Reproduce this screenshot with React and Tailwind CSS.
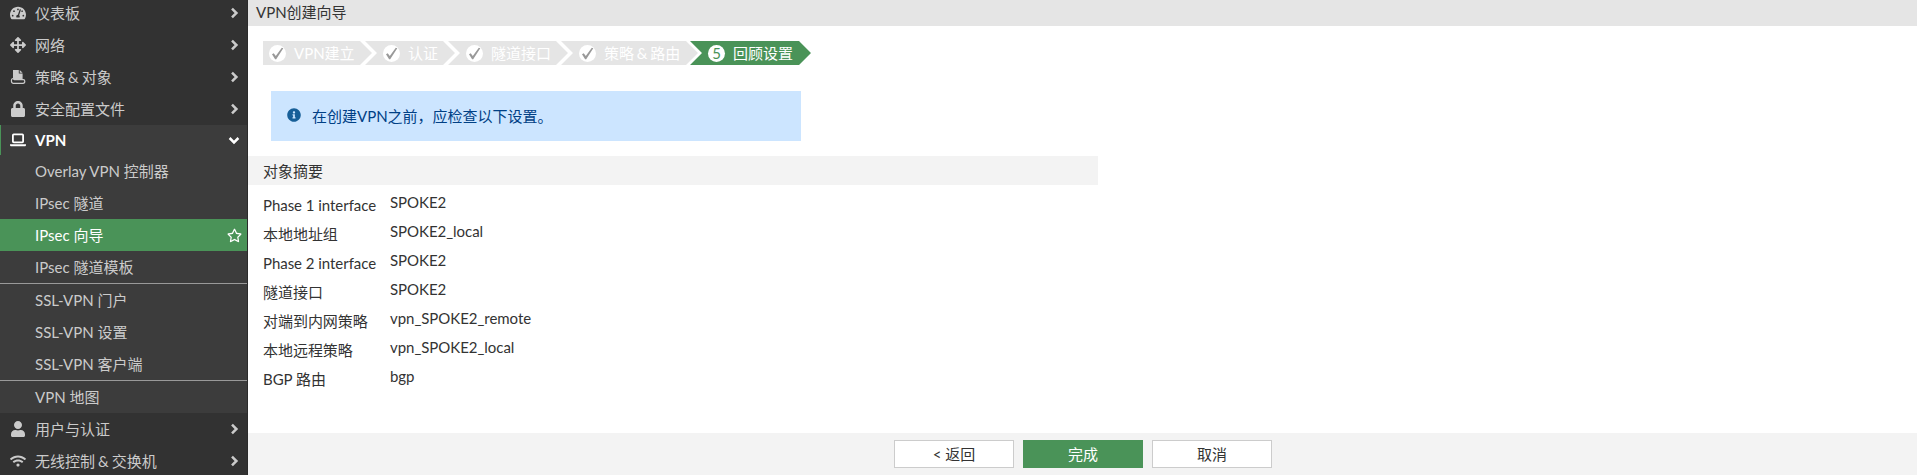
import React from "react";
import { FaTachometerAlt, FaArrowsAlt, FaLock, FaUser, FaWifi, FaInfoCircle, FaRegStar } from "react-icons/fa";

function PolicyIcon() {
  return (
    <svg width="16" height="16" viewBox="0 0 16 16" fill="currentColor">
      <path d="M3 1h5.800v3.400H12.600V10H3z" />
      <path d="M9.700 1l2.900 2.700H9.700z" />
      <path d="M2.800 9.600c-1.200 0-1.400 1-1.400 2s.2 2.700 1.600 2.700h10c1.400 0 1.800-.8 1.800-2 0-1.100-.5-1.700-1.600-1.700H4.400c-.8 0-.8-1-1.600-1z" fill="#323232" stroke="currentColor" strokeWidth="1.200" />
    </svg>
  );
}

function LaptopIcon() {
  return (
    <svg width="16" height="16" viewBox="0 0 16 16" fill="none" stroke="currentColor">
      <rect x="2.900" y="2.400" width="10.200" height="8" rx="0.800" strokeWidth="1.800" />
      <path d="M0 12.200h16v.8c0 .8-.6 1.300-1.300 1.300H1.300C.6 14.300 0 13.800 0 13z" fill="currentColor" stroke="none" />
    </svg>
  );
}

function Chevron({ down }) {
  return (
    <svg width="12" height="12" viewBox="0 0 12 12" fill="none" stroke="currentColor" strokeWidth="2.500" className={down ? "rotate-90" : ""}>
      <path d="M4 1.600L8.400 6L4 10.400" />
    </svg>
  );
}

function MenuRow({ icon, label, open }) {
  if (open) {
    return (
      <div className="flex h-[30px] shrink-0 items-center border-l border-[#4a9358] pr-[7px] pl-[9px] font-bold text-white">
        <span className="flex w-4 justify-center">{icon}</span>
        <span className="ml-[9px] flex-1">{label}</span>
        <Chevron down />
      </div>
    );
  }
  return (
    <div className="flex h-8 shrink-0 items-center pr-[7px] pl-[10px]">
      <span className="flex w-4 justify-center">{icon}</span>
      <span className="ml-[9px] flex-1 [word-spacing:-0.8px]">{label}</span>
      <Chevron />
    </div>
  );
}

function SubRow({ label, active }) {
  return (
    <div className={"flex h-8 shrink-0 items-center pr-[5px] pl-[35px] " + (active ? "bg-[#4a9358] text-white" : "")}>
      <span className="flex-1">{label}</span>
      {active && <FaRegStar size={15} />}
    </div>
  );
}

function Check() {
  return (
    <svg width="17" height="17" viewBox="0 0 17 17">
      <circle cx="8.500" cy="8.500" r="8.500" fill="#fff" />
      <path d="M3 9.300l1.700-1 2.100 2.700 6-8.200 1.500.4-7.100 11h-1.100z" fill="#999" />
    </svg>
  );
}

const shapes = {
  first: "[clip-path:polygon(0_0,calc(100%_-_12px)_0,100%_50%,calc(100%_-_12px)_100%,0_100%)]",
  rest: "[clip-path:polygon(0_0,calc(100%_-_12px)_0,100%_50%,calc(100%_-_12px)_100%,0_100%,12px_50%)]",
};

function Step({ label, width, offset = "pl-[18px]", first, current }) {
  return (
    <div className={`flex h-6 shrink-0 items-center text-white ${width} ${offset} ${first ? shapes.first : shapes.rest} ${current ? "bg-[#4a9358]" : "bg-[#e5e5e5]"}`}>
      {current ? (
        <span className="mt-[1px] flex size-[17px] items-center justify-center rounded-full bg-white text-[#4a9358]">
          <span className="-mt-[1px]">5</span>
        </span>
      ) : (
        <span className="mt-[1px]"><Check /></span>
      )}
      <span className="ml-[8px] whitespace-nowrap [word-spacing:-1px]">{label}</span>
    </div>
  );
}

const rows = [
  ["Phase 1 interface", "SPOKE2"],
  ["本地地址组", "SPOKE2_local"],
  ["Phase 2 interface", "SPOKE2"],
  ["隧道接口", "SPOKE2"],
  ["对端到内网策略", "vpn_SPOKE2_remote"],
  ["本地远程策略", "vpn_SPOKE2_local"],
  ["BGP 路由", "bgp"],
];

export default function App() {
  return (
    <div className="flex h-[475px] w-[1917px] overflow-hidden bg-white font-[Lato,'Noto_Sans_CJK_SC',sans-serif] text-[15px] leading-5 text-[#333]">
      <nav className="flex w-[248px] shrink-0 flex-col overflow-hidden border-r border-[#2b2b2b] bg-[#323232] text-[#cbcbcb]">
        <div className="-mt-[3px] flex flex-col">
          <MenuRow icon={<FaTachometerAlt size={16} />} label="仪表板" />
          <MenuRow icon={<FaArrowsAlt size={16} />} label="网络" />
          <MenuRow icon={<PolicyIcon />} label="策略 & 对象" />
          <MenuRow icon={<FaLock size={16} />} label="安全配置文件" />
        </div>
        <div className="flex flex-col bg-[#3c3c3c]">
          <MenuRow icon={<LaptopIcon />} label="VPN" open />
          <SubRow label="Overlay VPN 控制器" />
          <SubRow label="IPsec 隧道" />
          <SubRow label="IPsec 向导" active />
          <SubRow label="IPsec 隧道模板" />
          <div className="h-px bg-[#999]" />
          <SubRow label="SSL-VPN 门户" />
          <SubRow label="SSL-VPN 设置" />
          <SubRow label="SSL-VPN 客户端" />
          <div className="h-px bg-[#999]" />
          <SubRow label="VPN 地图" />
        </div>
        <MenuRow icon={<FaUser size={16} />} label="用户与认证" />
        <MenuRow icon={<FaWifi size={16} />} label="无线控制 & 交换机" />
      </nav>
      <main className="flex flex-1 flex-col">
        <header className="flex h-[26px] shrink-0 items-center bg-[#e5e5e5] pb-[2px] pl-[8px]">VPN创建向导</header>
        <div className="mt-[15px] ml-[15px] flex">
          <Step label="VPN建立" width="w-[109px]" offset="pl-[6px]" first />
          <Step label="认证" width="-ml-[7px] w-[90px]" />
          <Step label="隧道接口" width="-ml-[7px] w-[120px]" />
          <Step label="策略 & 路由" width="-ml-[7px] w-[137px]" />
          <Step label="回顾设置" width="-ml-[8px] w-[121px]" current />
        </div>
        <div className="mt-[26px] ml-[23px] flex h-[50px] w-[530px] shrink-0 items-center bg-[#cce5ff] pl-[16px] text-[#004085]">
          <FaInfoCircle size={14} className="-mt-[2px] text-[#175f98]" />
          <span className="ml-[11px]">在创建VPN之前，应检查以下设置。</span>
        </div>
        <h2 className="mt-[15px] flex h-[29px] w-[850px] shrink-0 items-center bg-[#f3f3f3] pl-[15px]">对象摘要</h2>
        <dl className="mt-[5px] ml-[15px] tracking-[-0.04px]">
          {rows.map(([name, value]) => (
            <div key={name} className="flex h-[29px]">
              <dt className="w-[127px] pt-[5px]">{name}</dt>
              <dd className="pt-[2px]">{value}</dd>
            </div>
          ))}
        </dl>
        <footer className="mt-auto flex h-[42px] shrink-0 gap-[9px] bg-[#f3f3f3] pt-[7px] pl-[646px]">
          <button className="h-7 w-[120px] border border-[#ccc] bg-white">&lt; 返回</button>
          <button className="h-7 w-[120px] bg-[#4a9358] text-white">完成</button>
          <button className="h-7 w-[120px] border border-[#ccc] bg-white">取消</button>
        </footer>
      </main>
    </div>
  );
}
